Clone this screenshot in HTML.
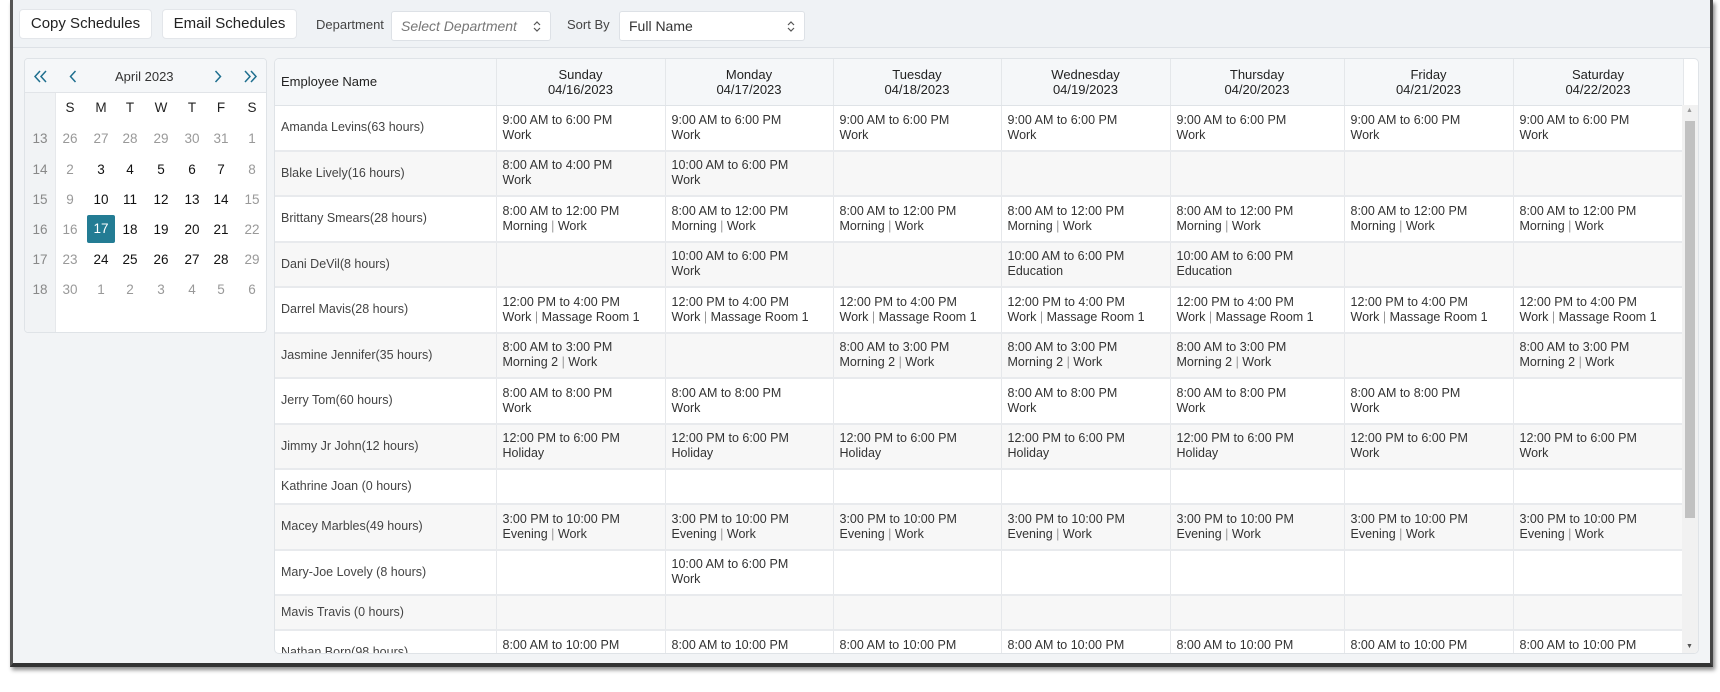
<!DOCTYPE html>
<html><head><meta charset="utf-8"><style>
*{box-sizing:border-box;margin:0;padding:0}
body{width:1720px;height:692px;background:#fff;font-family:"Liberation Sans",sans-serif;position:relative;overflow:hidden;color:#333}
#frame{position:absolute;left:10px;top:0;width:1703px;height:667px;background:#f2f4f6;border-left:3px solid #555;border-right:3px solid #444;border-bottom:4px solid #333;box-shadow:2px 3px 4px rgba(0,0,0,.45)}
#bar{position:absolute;left:0;top:0;right:0;height:48px;background:#eff2f5;border-bottom:1px solid #dde1e6}
.btn{position:absolute;top:9px;height:30px;background:#fff;border:1px solid #e3e6ea;border-radius:4px;font-size:15px;color:#222;text-align:center;line-height:28px}
.lbl{position:absolute;top:17px;font-size:13px;color:#444}
.sel{position:absolute;top:11px;height:30px;background:#fff;border:1px solid #dde1e6;border-radius:3px;font-size:14px;line-height:28px;padding-left:9px;color:#333}
.sel svg{position:absolute;right:9px;top:8px}
#cal{position:absolute;left:11px;top:58px;width:243px;height:275px;background:#fff;border:1px solid #dfe3e7;border-radius:4px;overflow:hidden}
#calh{height:34px;background:#f5f7f9;border-bottom:1px solid #e1e4e8;position:relative;font-size:13px}
#calh svg{position:absolute;top:11px}
#wk{position:absolute;left:0;top:34px;width:31px;bottom:0;background:#f1f3f5;border-right:1px solid #e6e8eb}
.c{position:absolute;width:28px;text-align:center;font-size:13.5px;transform:translateX(-14px);line-height:16px}
#tbl{position:absolute;left:261px;top:58px;width:1425px;height:596px;background:#fff;border:1px solid #dfe3e7;border-radius:5px;overflow:hidden}
table{border-collapse:collapse;table-layout:fixed;width:1408px;font-size:12.5px}
th{background:#f5f7f9;font-weight:normal;color:#222;font-size:13px;line-height:15px;height:46px;border-right:1px solid #e4e7ea;border-bottom:1px solid #dfe3e7}
td{border-right:1px solid #e6e8eb;border-bottom:2px solid #e8eaed;padding-left:6px;vertical-align:middle;line-height:15px;color:#333}
td:first-child{padding-left:6px;color:#444}
tr.g td{background:#f7f7f7}
tr.t td{height:45.5px}
tr.s td{height:35px}
#sb{position:absolute;right:0;top:46px;width:16px;bottom:0;background:#f1f1f1}
#thumb{position:absolute;left:3px;right:3px;top:16px;height:397px;background:#c1c1c1}
</style></head><body>
<div id="frame">
<div id="bar">
<div class="btn" style="left:6px;width:133px">Copy Schedules</div>
<div class="btn" style="left:149px;width:135px">Email Schedules</div>
<div class="lbl" style="left:303px">Department</div>
<div class="sel" style="left:378px;width:160px;color:#777;font-style:italic">Select Department<svg width="8" height="13" viewBox="0 0 8 13"><path d="M1 5L4 2L7 5M1 8L4 11L7 8" fill="none" stroke="#555" stroke-width="1.2"/></svg></div>
<div class="lbl" style="left:554px">Sort By</div>
<div class="sel" style="left:606px;width:186px">Full Name<svg width="8" height="13" viewBox="0 0 8 13"><path d="M1 5L4 2L7 5M1 8L4 11L7 8" fill="none" stroke="#555" stroke-width="1.2"/></svg></div>
</div>
<div id="cal">
<div id="calh">
<svg style="left:9px" width="14" height="13" viewBox="0 0 14 13"><path d="M6 1L1 6.5L6 12M12 1L7 6.5L12 12" fill="none" stroke="#1f6f8f" stroke-width="1.5"/></svg>
<svg style="left:44px" width="8" height="13" viewBox="0 0 8 13"><path d="M6.5 1L1.5 6.5L6.5 12" fill="none" stroke="#1f6f8f" stroke-width="1.5"/></svg>
<span style="position:absolute;left:90px;top:10px;color:#333">April 2023</span>
<svg style="left:189px" width="8" height="13" viewBox="0 0 8 13"><path d="M1.5 1L6.5 6.5L1.5 12" fill="none" stroke="#1f6f8f" stroke-width="1.5"/></svg>
<svg style="left:218px" width="14" height="13" viewBox="0 0 14 13"><path d="M2 1L7 6.5L2 12M8 1L13 6.5L8 12" fill="none" stroke="#1f6f8f" stroke-width="1.5"/></svg>
</div>
<div id="wk"></div>
<div id="days"></div>
</div>
<div id="tbl">
<table>
<colgroup><col style="width:221px"><col style="width:169px"><col style="width:168px"><col style="width:168px"><col style="width:169px"><col style="width:174px"><col style="width:169px"><col style="width:170px"></colgroup>
<thead><tr><th style="text-align:left;padding-left:6px">Employee Name</th><th>Sunday<br>04/16/2023</th><th>Monday<br>04/17/2023</th><th>Tuesday<br>04/18/2023</th><th>Wednesday<br>04/19/2023</th><th>Thursday<br>04/20/2023</th><th>Friday<br>04/21/2023</th><th>Saturday<br>04/22/2023</th></tr></thead>
<tbody id="tb"></tbody>
</table>
<div id="sb"><div style="position:absolute;top:2px;left:4px;font-size:7px;color:#999">▲</div><div id="thumb"></div><div style="position:absolute;bottom:3px;left:4px;font-size:7px;color:#555">▼</div></div>
</div>
</div>
<script>
var d=document.getElementById('cal');
var xs=[45,76,105,136,167,196,227],dow=['S','M','T','W','T','F','S'];
var h='';dow.forEach(function(t,i){h+='<div class="c" style="left:'+xs[i]+'px;top:41px;color:#222">'+t+'</div>'});
var wk=[13,14,15,16,17,18],ys=[72,103,133,163,193,223];
var rows=[[26,27,28,29,30,31,1],[2,3,4,5,6,7,8],[9,10,11,12,13,14,15],[16,17,18,19,20,21,22],[23,24,25,26,27,28,29],[30,1,2,3,4,5,6]];
rows.forEach(function(r,ri){h+='<div class="c" style="left:15px;top:'+ys[ri]+'px;color:#888">'+wk[ri]+'</div>';
r.forEach(function(v,ci){var out=(ri==0)||(ri==5)||ci==0||ci==6;var st='color:'+(out?'#999':'#111');
if(ri==3&&ci==1){h+='<div style="position:absolute;left:62px;top:156px;width:28px;height:28px;background:#237c94;border-radius:2px;color:#fff;text-align:center;line-height:28px;font-size:13.5px">17</div>';return;}
h+='<div class="c" style="left:'+xs[ci]+'px;top:'+ys[ri]+'px;'+st+'">'+v+'</div>'})});
d.insertAdjacentHTML('beforeend',h);
var W='Work',A=['9:00 AM to 6:00 PM',W];
var data=[
['Amanda Levins(63 hours)',[A,A,A,A,A,A,A]],
['Blake Lively(16 hours)',[['8:00 AM to 4:00 PM',W],['10:00 AM to 6:00 PM',W],0,0,0,0,0]],
['Brittany Smears(28 hours)',Array(7).fill(['8:00 AM to 12:00 PM','Morning | Work'])],
['Dani DeVil(8 hours)',[0,['10:00 AM to 6:00 PM',W],0,['10:00 AM to 6:00 PM','Education'],['10:00 AM to 6:00 PM','Education'],0,0]],
['Darrel Mavis(28 hours)',Array(7).fill(['12:00 PM to 4:00 PM','Work | Massage Room 1'])],
['Jasmine Jennifer(35 hours)',(function(){var m=['8:00 AM to 3:00 PM','Morning 2 | Work'];return [m,0,m,m,m,0,m]})()],
['Jerry Tom(60 hours)',(function(){var m=['8:00 AM to 8:00 PM',W];return [m,m,0,m,m,m,0]})()],
['Jimmy Jr John(12 hours)',[['12:00 PM to 6:00 PM','Holiday'],['12:00 PM to 6:00 PM','Holiday'],['12:00 PM to 6:00 PM','Holiday'],['12:00 PM to 6:00 PM','Holiday'],['12:00 PM to 6:00 PM','Holiday'],['12:00 PM to 6:00 PM',W],['12:00 PM to 6:00 PM',W]]],
['Kathrine Joan (0 hours)',null],
['Macey Marbles(49 hours)',Array(7).fill(['3:00 PM to 10:00 PM','Evening | Work'])],
['Mary-Joe Lovely (8 hours)',[0,['10:00 AM to 6:00 PM',W],0,0,0,0,0]],
['Mavis Travis (0 hours)',null],
['Nathan Born(98 hours)',Array(7).fill(['8:00 AM to 10:00 PM',W])]];
var t='';data.forEach(function(r,i){var cls=(i%2?'g ':'')+(r[1]?'t':'s');t+='<tr class="'+cls+'"><td>'+r[0]+'</td>';
for(var k=0;k<7;k++){var c=r[1]&&r[1][k];t+='<td>'+(c?c[0]+'<br>'+c[1].replace(' | ',' <span style="color:#999">|</span> '):'')+'</td>'}t+='</tr>'});
document.getElementById('tb').innerHTML=t;
</script>
</body></html>
